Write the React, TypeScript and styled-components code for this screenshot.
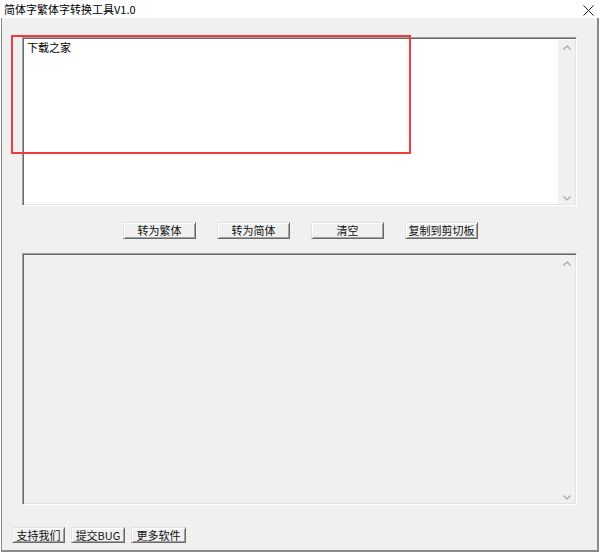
import React from "react";
import styled, { createGlobalStyle } from "styled-components";

const Global = createGlobalStyle`
  html, body { margin: 0; padding: 0; background: #ffffff; }
  body { font-family: "Noto Sans CJK SC", "Noto Sans", sans-serif; }
  * { box-sizing: border-box; }
`;

const Window = styled.div`
  position: relative;
  width: 600px;
  height: 553px;
  display: flex;
  flex-direction: column;
  background: #ffffff;
`;

const TitleBar = styled.div`
  height: 18px;
  display: flex;
  align-items: center;
  justify-content: space-between;
  padding: 0 6px 0 4px;
  background: #ffffff;
`;

const Title = styled.span`
  font-size: 11px;
  line-height: 18px;
  color: #000;
  white-space: nowrap;
`;

const CloseBtn = styled.div`
  width: 12px;
  height: 12px;
  display: flex;
  align-items: center;
  justify-content: center;
  margin-top: 2px;
`;

const Client = styled.div`
  flex: 1;
  display: flex;
  flex-direction: column;
  margin: 0 1px 1px 1px;
  background: #f0f0f0;
  border-left: 1px solid #8a8a8a;
  border-right: 2px solid #8a8a8a;
  border-bottom: 2px solid #8a8a8a;
`;

const Edit = styled.div<{ $h: number; $top: number; $bg: string }>`
  position: relative;
  width: 555px;
  height: ${(p) => p.$h}px;
  margin: ${(p) => p.$top}px 0 0 20px;
  background: ${(p) => p.$bg};
  border-top: 1px solid #a0a0a0;
  border-left: 1px solid #a0a0a0;
  border-right: 1px solid #ffffff;
  border-bottom: 1px solid #ffffff;
  box-shadow: inset 1px 1px 0 #696969, inset -1px -1px 0 #e3e3e3;
  display: flex;
`;

const EditText = styled.div`
  flex: 1;
  padding: 2px 0 0 4px;
  font-size: 11px;
  line-height: 14px;
  color: #000;
`;

const ScrollBar = styled.div`
  width: 17px;
  margin: 2px 1px 1px 0;
  background: #f0f0f0;
  display: flex;
  flex-direction: column;
  justify-content: space-between;
  align-items: center;
  padding: 5px 0 3px;
`;

const ButtonRow = styled.div`
  display: flex;
  justify-content: center;
  gap: 21px;
  margin: 16px 0 0 20px;
  width: 557px;
`;

const BottomRow = styled.div`
  display: flex;
  gap: 6px;
  margin: 22px 0 0 10px;
`;

const Button = styled.div<{ $w: number; $h: number }>`
  width: ${(p) => p.$w}px;
  height: ${(p) => p.$h}px;
  background: #f0f0f0;
  border-top: 1px solid #e3e3e3;
  border-left: 1px solid #e3e3e3;
  border-right: 1px solid #696969;
  border-bottom: 1px solid #696969;
  box-shadow: inset 1px 1px 0 #ffffff, inset -1px -1px 0 #a0a0a0;
  display: flex;
  align-items: center;
  justify-content: center;
  font-size: 11px;
  line-height: 1;
  color: #111;
  white-space: nowrap;
`;

const Highlight = styled.div`
  position: absolute;
  left: 11px;
  top: 35px;
  width: 400px;
  height: 119px;
  border: 2px solid #f23a3a;
  pointer-events: none;
`;

const Up = () => (
  <svg width="8" height="5" viewBox="0 0 8 5">
    <polyline points="0.5,4.5 4,1 7.5,4.5" fill="none" stroke="#a6a6a6" strokeWidth="1.2" />
  </svg>
);
const Down = () => (
  <svg width="8" height="5" viewBox="0 0 8 5">
    <polyline points="0.5,0.5 4,4 7.5,0.5" fill="none" stroke="#a6a6a6" strokeWidth="1.2" />
  </svg>
);

export default function App() {
  const top = ["转为繁体", "转为简体", "清空", "复制到剪切板"];
  const bottom = [
    { t: "支持我们", w: 53 },
    { t: "提交BUG", w: 54 },
    { t: "更多软件", w: 55 },
  ];
  return (
    <>
      <Global />
      <Window>
        <TitleBar>
          <Title>简体字繁体字转换工具V1.0</Title>
          <CloseBtn>
            <svg width="11" height="11" viewBox="0 0 11 11">
              <path d="M0.5 0.5 L10.5 10.5 M10.5 0.5 L0.5 10.5" stroke="#222" strokeWidth="1" />
            </svg>
          </CloseBtn>
        </TitleBar>
        <Client>
          <Edit $h={169} $top={19} $bg="#ffffff">
            <EditText>下载之家</EditText>
            <ScrollBar>
              <Up />
              <Down />
            </ScrollBar>
          </Edit>
          <ButtonRow>
            {top.map((t) => (
              <Button key={t} $w={73} $h={17}>
                {t}
              </Button>
            ))}
          </ButtonRow>
          <Edit $h={252} $top={14} $bg="#f0f0f0">
            <EditText />
            <ScrollBar>
              <Up />
              <Down />
            </ScrollBar>
          </Edit>
          <BottomRow>
            {bottom.map((b) => (
              <Button key={b.t} $w={b.w} $h={16}>
                {b.t}
              </Button>
            ))}
          </BottomRow>
        </Client>
        <Highlight />
      </Window>
    </>
  );
}
